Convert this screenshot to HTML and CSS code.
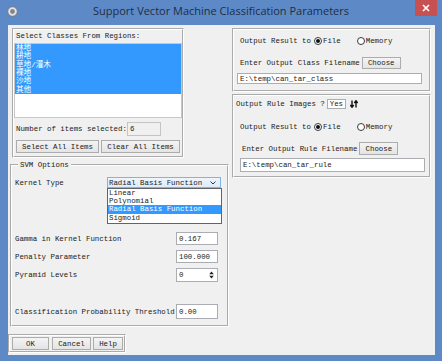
FILE: index.html
```html
<!DOCTYPE html>
<html lang="en">
<head>
  <meta charset="UTF-8"/>
  <meta name="viewport" content="width=device-width, initial-scale=1.0"/>
  <title>Support Vector Machine Classification Parameters</title>
  <link rel="stylesheet" href="styles.css">
</head>
<body>
  <div class="window">
    <div class="titlebar">
      <svg class="app-icon" width="11" height="11" viewBox="0 0 11 11">
        <circle cx="5.5" cy="5.5" r="4.8" fill="#e4e4e4" stroke="#6f7780" stroke-width="1"/>
        <circle cx="5.5" cy="5.5" r="2.4" fill="#7d8792"/>
      </svg>
      <div class="title">Support Vector Machine Classification Parameters</div>
      <div class="close">
        <svg width="8" height="8" viewBox="0 0 8 8">
          <path d="M1 1 L7 7 M7 1 L1 7" stroke="#fff" stroke-width="1.6"/>
        </svg>
      </div>
    </div>

    <div class="client">
      <div class="main">
        <div class="left">
          <div class="box classes">
            <div class="caption">Select Classes From Regions:</div>
            <ul class="listbox">
              <li class="sel">林地</li>
              <li class="sel">耕地</li>
              <li class="sel">草地/灌木</li>
              <li class="sel">裸地</li>
              <li class="sel">沙地</li>
              <li class="sel">其他</li>
            </ul>
            <div class="count-row">
              <span>Number of items selected:</span>
              <span class="field readonly count">6</span>
            </div>
            <div class="btn-row">
              <button class="btn select-all">Select All Items</button>
              <button class="btn clear-all">Clear All Items</button>
            </div>
          </div>

          <fieldset class="group svm">
            <legend>SVM Options</legend>
            <div class="param kernel">
              <span class="label">Kernel Type</span>
              <div class="combo">
                <span>Radial Basis Function</span>
                <svg width="6" height="4" viewBox="0 0 6 4">
                  <path d="M0.5 0.5 L3 3 L5.5 0.5" fill="none" stroke="#333" stroke-width="1"/>
                </svg>
              </div>
              <ul class="droplist">
                <li>Linear</li>
                <li>Polynomial</li>
                <li class="hl">Radial Basis Function</li>
                <li>Sigmoid</li>
              </ul>
            </div>
            <div class="param gamma">
              <span class="label">Gamma in Kernel Function</span>
              <span class="field">0.167</span>
            </div>
            <div class="param penalty">
              <span class="label">Penalty Parameter</span>
              <span class="field">100.000</span>
            </div>
            <div class="param pyramid">
              <span class="label">Pyramid Levels</span>
              <span class="field spin">
                <span>0</span>
                <svg width="5" height="8" viewBox="0 0 5 8">
                  <path d="M2.5 0.5 L4.8 3.3 L0.2 3.3 Z M2.5 7.5 L4.8 4.7 L0.2 4.7 Z" fill="#222"/>
                </svg>
              </span>
            </div>
            <div class="param threshold">
              <span class="label">Classification Probability Threshold</span>
              <span class="field">0.00</span>
            </div>
          </fieldset>
        </div>

        <div class="right">
          <div class="box out-class">
            <div class="radio-row">
              <span>Output Result to</span>
              <span class="radio on"></span><span class="opt">File</span>
              <span class="radio memory"></span><span class="opt">Memory</span>
            </div>
            <div class="file-row">
              <span>Enter Output Class Filename</span>
              <button class="btn choose">Choose</button>
            </div>
            <div class="field path">E:\temp\can_tar_class</div>
          </div>

          <div class="box out-rule">
            <div class="rule-row">
              <span>Output Rule Images ?</span>
              <span class="field yes">Yes</span>
              <svg class="toggle" width="8" height="8" viewBox="0 0 8 8">
                <path d="M2 0.5 V7 M0.3 5 L2 7.3 L3.7 5" fill="none" stroke="#111" stroke-width="1.4"/>
                <path d="M6 7.5 V1 M4.3 3 L6 0.7 L7.7 3" fill="none" stroke="#111" stroke-width="1.4"/>
              </svg>
            </div>
            <div class="radio-row">
              <span>Output Result to</span>
              <span class="radio on"></span><span class="opt">File</span>
              <span class="radio memory"></span><span class="opt">Memory</span>
            </div>
            <div class="file-row">
              <span>Enter Output Rule Filename</span>
              <button class="btn choose">Choose</button>
            </div>
            <div class="field path">E:\temp\can_tar_rule</div>
          </div>
        </div>
      </div>

      <div class="footer">
        <button class="btn ok">OK</button>
        <button class="btn cancel">Cancel</button>
        <button class="btn help">Help</button>
      </div>
    </div>
  </div>
</body>
</html>
```

FILE: styles.css
```css
body {
  margin: 0;
  font-family: "Liberation Mono", "Noto Sans CJK SC", monospace;
  font-size: 7.4px;
  line-height: 8px;
  color: #1a1a1a;
}

ul {
  list-style: none;
  margin: 0;
  padding: 0;
}

.window {
  width: 442px;
  height: 361px;
  background: #5d8ac7;
  display: flex;
  flex-direction: column;
}

/* title bar */
.titlebar {
  height: 25px;
  display: flex;
  align-items: flex-start;
}

.app-icon {
  margin: 6px 0 0 7px;
}

.title {
  flex: 1;
  text-align: center;
  padding-left: 9px;
  font-family: "Open Sans", sans-serif;
  font-size: 11px;
  line-height: 22px;
  color: #1f2d45;
}

.close {
  width: 22px;
  height: 16px;
  margin-right: 5px;
  background: #c75050;
  display: flex;
  align-items: center;
  justify-content: center;
}

/* dialog area */
.client {
  flex: 1;
  margin: 0 7px 6px 8px;
  background: #f0f0f0;
}

.main {
  display: flex;
  height: 302px;
}

.left {
  width: 219px;
  margin-left: 2px;
}

.right {
  width: 199px;
  margin-left: 3px;
  padding-top: 3px;
}

.box {
  box-sizing: border-box;
  border: 2px groove #fff;
}

.field {
  box-sizing: border-box;
  display: flex;
  align-items: center;
  background: #fff;
  border: 1px solid #abadb3;
  padding-left: 2px;
  white-space: nowrap;
}

.btn {
  box-sizing: border-box;
  font: inherit;
  color: #1a1a1a;
  padding: 0;
  background: linear-gradient(#f4f4f4, #e4e4e4);
  border: 1px solid #acacac;
  height: 13px;
}

/* classes list */
.classes {
  margin: 3px 0 0 2px;
  width: 172px;
  height: 130px;
}

.caption {
  margin-top: 2px;
  padding-left: 2px;
}

.listbox {
  margin-top: 3px;
  height: 75px;
  box-sizing: border-box;
  background: #fff;
  border: 1px solid #c8c8c8;
}

.listbox li {
  font-size: 7.6px;
  line-height: 8.33px;
  height: 8.33px;
  padding-left: 1px;
}

.listbox .sel {
  background: #3399ff;
  color: #fff;
}

.count-row {
  margin: 4px 0 0 2px;
  height: 14px;
  display: flex;
  align-items: center;
}

.field.readonly {
  background: #f0f0f0;
  border-color: #c4c4c4;
}

.count {
  width: 34px;
  height: 14px;
}

.btn-row {
  margin: 4px 0 0 2px;
  display: flex;
  gap: 2px;
}

.select-all {
  width: 83px;
}

.clear-all {
  width: 79px;
}

/* SVM options */
.group {
  box-sizing: border-box;
  margin: 3px 0 0 0;
  padding: 0;
  width: 219px;
  height: 166px;
  border: 2px groove #fff;
}

.group legend {
  margin-left: 6px;
  padding: 0 2px;
}

.param {
  display: flex;
  align-items: center;
}

.param .label {
  padding-left: 3px;
  width: 161px;
}

.param .field {
  width: 42px;
}

.kernel {
  position: relative;
  margin-top: 8px;
  height: 11px;
}

.kernel .label {
  width: 92px;
}

.combo {
  box-sizing: border-box;
  width: 114px;
  height: 11px;
  padding: 0 4px 0 1px;
  display: flex;
  align-items: center;
  justify-content: space-between;
  background: linear-gradient(#eef5fc, #dcecfc);
  border: 1px solid #7eb4ea;
}

.droplist {
  position: absolute;
  top: 11px;
  left: 95px;
  width: 115px;
  box-sizing: border-box;
  background: #fff;
  border: 1px solid #646464;
  padding: 0 0 1px;
}

.droplist li {
  line-height: 8.2px;
  height: 8.2px;
  padding-left: 1px;
}

.droplist .hl {
  background: #3399ff;
  color: #fff;
}

.gamma {
  margin-top: 44px;
  height: 13px;
}

.gamma .field,
.penalty .field {
  height: 13px;
}

.penalty {
  margin-top: 5px;
  height: 13px;
}

.pyramid {
  margin-top: 5px;
  height: 14px;
}

.field.spin {
  height: 14px;
  justify-content: space-between;
  padding-right: 3px;
}

.threshold {
  margin-top: 22px;
  height: 15px;
}

.threshold .field {
  height: 15px;
}

/* output boxes */
.out-class {
  height: 64px;
}

.out-rule {
  margin-top: 2px;
  height: 84px;
}

.radio-row {
  display: flex;
  align-items: center;
  height: 10px;
  padding-left: 6px;
}

.out-class .radio-row {
  margin-top: 6px;
}

.out-rule .radio-row {
  margin-top: 13px;
}

.radio {
  box-sizing: border-box;
  width: 8px;
  height: 8px;
  margin-left: 3px;
  border-radius: 50%;
  border: 1px solid #3a3a3a;
  background: #fff;
  display: flex;
  align-items: center;
  justify-content: center;
}

.radio.on::after {
  content: "";
  width: 4px;
  height: 4px;
  border-radius: 50%;
  background: #111;
}

.radio.memory {
  margin-left: 16px;
}

.opt {
  margin-left: 1px;
}

.file-row {
  display: flex;
  align-items: center;
  padding-left: 6px;
}

.out-class .file-row {
  margin-top: 11px;
  height: 12px;
}

.out-rule .file-row {
  margin-top: 10px;
  height: 13px;
  padding-left: 8px;
}

.choose {
  margin-left: 2px;
  width: 39px;
  height: 12px;
}

.out-rule .choose {
  height: 13px;
}

.field.path {
  width: 185px;
}

.out-class .path {
  margin: 4px 0 0 3px;
  height: 11px;
}

.out-rule .path {
  margin: 3px 0 0 6px;
  height: 14px;
}

.rule-row {
  display: flex;
  align-items: center;
  margin-top: 3px;
  height: 10px;
  padding-left: 2px;
}

.field.yes {
  width: 19px;
  height: 10px;
  margin-left: 2px;
}

.toggle {
  margin-left: 4px;
}

/* bottom buttons */
.footer {
  box-sizing: border-box;
  margin-top: 7px;
  width: 118px;
  height: 19px;
  border: 2px groove #fff;
  padding: 1px 0 0 2px;
  display: flex;
}

.ok {
  width: 37px;
}

.cancel {
  width: 39px;
  margin-left: 3px;
}

.help {
  width: 30px;
  margin-left: 2px;
}
```
